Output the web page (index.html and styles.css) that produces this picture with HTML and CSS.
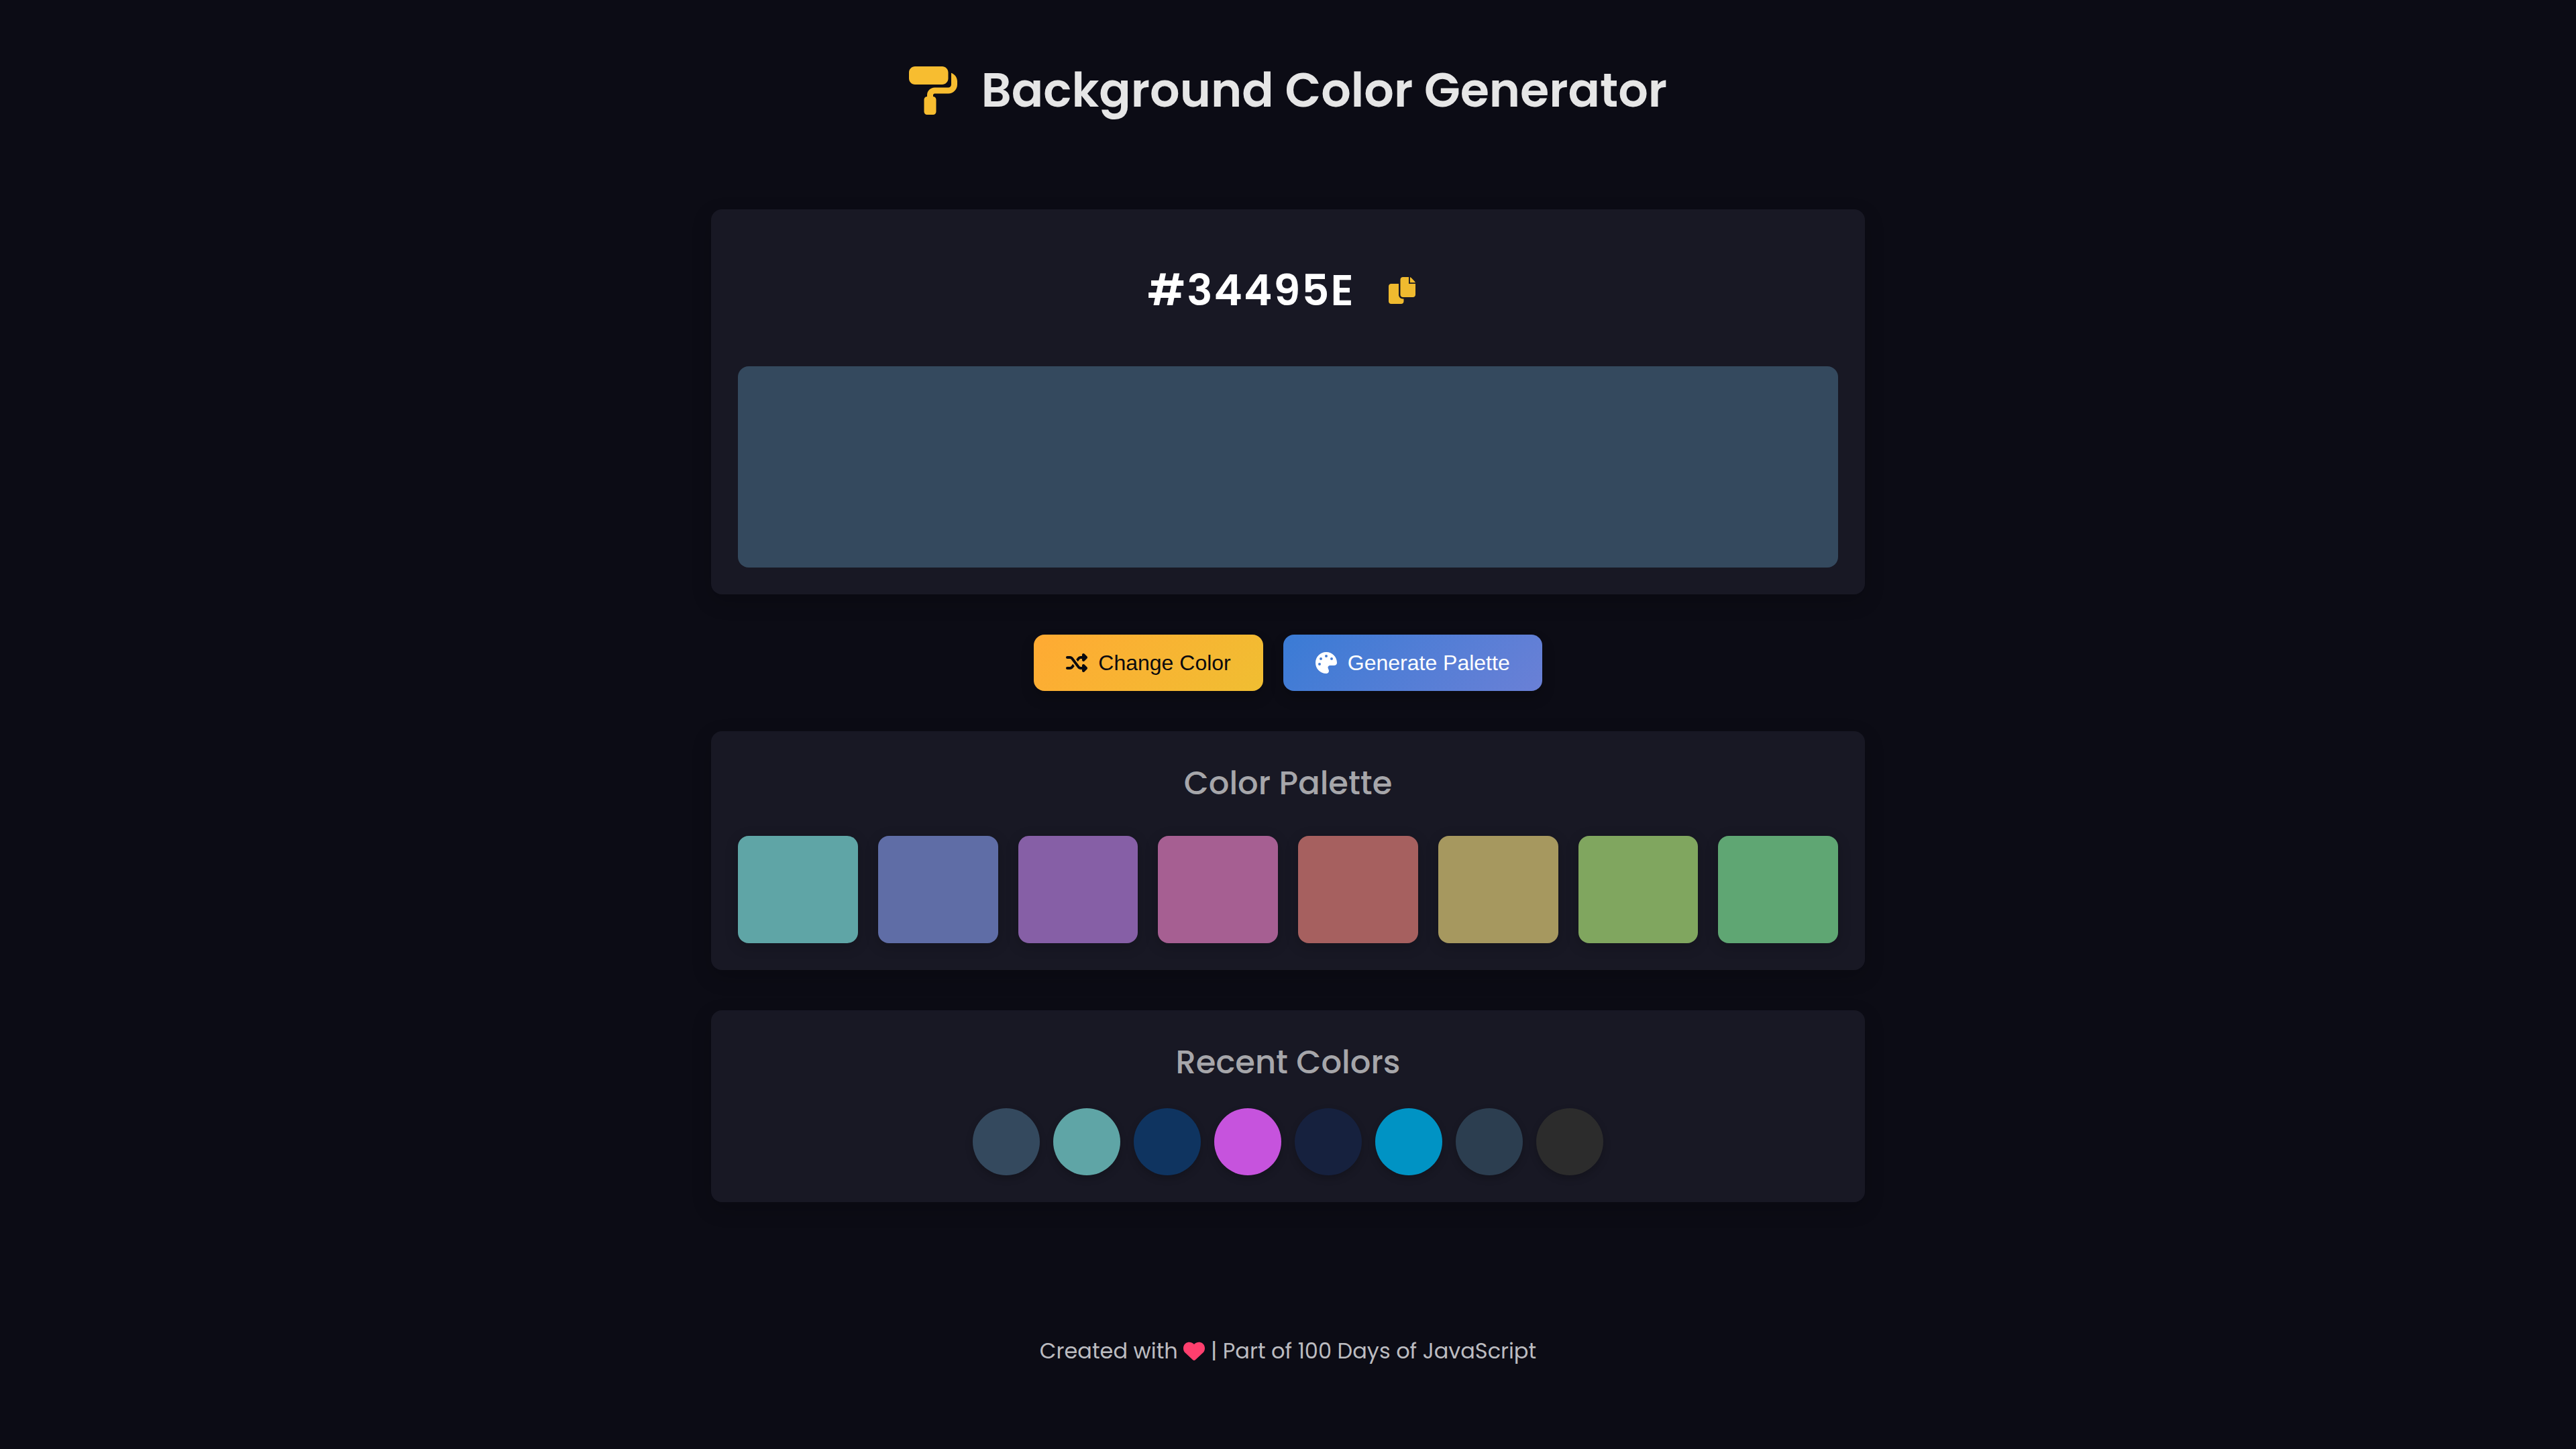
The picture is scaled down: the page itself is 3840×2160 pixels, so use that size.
FILE: index.html
```
<!DOCTYPE html>
<html lang="en">
<head>
<meta charset="UTF-8">
<meta name="viewport" content="width=device-width, initial-scale=1">
<title>Background Color Generator</title>
<link rel="stylesheet" href="styles.css">
</head>
<body>
<header class="header">
  <svg class="header-icon" viewBox="0 0 512 512" aria-hidden="true"><path d="M0 64C0 28.700 28.700 0 64 0H352c35.300 0 64 28.700 64 64v64c0 35.300-28.700 64-64 64H64c-35.300 0-64-28.700-64-64V64zM160 352c0-17.700 14.300-32 32-32V304c0-44.200 35.800-80 80-80H416c17.700 0 32-14.300 32-32V69.500c37.300 13.200 64 48.700 64 90.500v32c0 53-43 96-96 96H272c-8.800 0-16 7.200-16 16v16c17.700 0 32 14.300 32 32V480c0 17.700-14.300 32-32 32H192c-17.700 0-32-14.300-32-32V352z"/></svg>
  <h1 class="title">Background Color Generator</h1>
</header>
<main class="main">
  <section class="card">
    <div class="code-row">
      <span class="code">#34495E</span>
      <button class="copy" type="button" aria-label="Copy color code">
        <svg viewBox="0 0 512 512" aria-hidden="true"><path d="M272 0H396.100c12.700 0 24.900 5.100 33.900 14.100l67.900 67.900c9 9 14.100 21.200 14.100 33.900V336c0 26.500-21.500 48-48 48H272c-26.500 0-48-21.500-48-48V48c0-26.500 21.500-48 48-48zM48 128H192v64V336c0 44.200 35.800 80 80 80h16v48c0 26.500-21.500 48-48 48H48c-26.500 0-48-21.500-48-48V176c0-26.500 21.500-48 48-48z"/><path class="fold" d="M384 0h24v104h104v24H384z"/></svg>
      </button>
    </div>
    <div class="preview"></div>
  </section>
  <div class="actions">
    <button class="btn btn-change" type="button">
      <svg class="btn-icon" viewBox="0 0 512 512" aria-hidden="true"><path d="M403.800 34.400c12-5 25.700-2.200 34.900 6.900l64 64c6 6 9.400 14.100 9.400 22.600s-3.400 16.600-9.400 22.600l-64 64c-9.200 9.200-22.900 11.900-34.900 6.900s-19.800-16.600-19.800-29.600V160H352c-10.100 0-19.600 4.700-25.600 12.800L284 229.300 244 176l31.200-41.600C293.300 110.200 321.800 96 352 96h32V64c0-12.900 7.800-24.600 19.800-29.600zM164 282.700L204 336l-31.200 41.600C154.700 401.800 126.200 416 96 416H32c-17.700 0-32-14.300-32-32s14.300-32 32-32H96c10.100 0 19.600-4.700 25.600-12.800L164 282.700zm274.600 188c-9.200 9.200-22.900 11.900-34.900 6.900s-19.800-16.600-19.800-29.600V416H352c-30.200 0-58.700-14.200-76.800-38.400L121.600 172.800c-6-8.100-15.500-12.800-25.600-12.800H32c-17.700 0-32-14.300-32-32s14.300-32 32-32H96c30.200 0 58.700 14.200 76.800 38.400L326.400 339.200c6 8.100 15.500 12.800 25.600 12.800h32V320c0-12.900 7.800-24.600 19.800-29.600s25.700-2.200 34.900 6.900l64 64c6 6 9.400 14.100 9.400 22.600s-3.400 16.600-9.400 22.600l-64 64z"/></svg>
      <span>Change Color</span>
    </button>
    <button class="btn btn-palette" type="button">
      <svg class="btn-icon" viewBox="0 0 512 512" aria-hidden="true"><path fill-rule="evenodd" d="M512 256c0 .900 0 1.800 0 2.700-.400 36.500-33.600 61.300-70.100 61.300H344c-26.500 0-48 21.500-48 48 0 3.400.400 6.700 1 9.900 2.100 10.200 6.500 20 10.800 29.900 6.100 13.800 12.100 27.500 12.100 42 0 31.800-21.600 60.700-53.400 62-3.500.100-7 .200-10.600.200C114.600 512 0 397.400 0 256S114.600 0 256 0 512 114.600 512 256zM128 288a32 32 0 1 0-64 0 32 32 0 1 0 64 0zm0-96a32 32 0 1 0 0-64 32 32 0 1 0 0 64zM288 96a32 32 0 1 0-64 0 32 32 0 1 0 64 0zm96 96a32 32 0 1 0 0-64 32 32 0 1 0 0 64z"/></svg>
      <span>Generate Palette</span>
    </button>
  </div>
  <section class="card">
    <h2 class="card-title">Color Palette</h2>
    <div class="palette">
      <div class="swatch" style="background:#5fa5a6"></div>
      <div class="swatch" style="background:#5f6da6"></div>
      <div class="swatch" style="background:#865fa6"></div>
      <div class="swatch" style="background:#a65f92"></div>
      <div class="swatch" style="background:#a6605f"></div>
      <div class="swatch" style="background:#a6985f"></div>
      <div class="swatch" style="background:#80a65f"></div>
      <div class="swatch" style="background:#5fa673"></div>
    </div>
  </section>
  <section class="card">
    <h2 class="card-title card-title-tight">Recent Colors</h2>
    <div class="recent">
      <div class="dot" style="background:#34495e"></div>
      <div class="dot" style="background:#5fa5a6"></div>
      <div class="dot" style="background:#0f3460"></div>
      <div class="dot" style="background:#c653dd"></div>
      <div class="dot" style="background:#16213e"></div>
      <div class="dot" style="background:#0093c4"></div>
      <div class="dot" style="background:#2c3e50"></div>
      <div class="dot" style="background:#2c2c2c"></div>
    </div>
  </section>
</main>
<footer class="footer">Created with <svg class="heart" viewBox="0 0 512 448" role="img" aria-label="love"><path d="M47.600 268.300L228.300 437c7.500 7 17.400 10.900 27.700 10.900s20.200-3.900 27.700-10.900L464.400 268.300c30.400-28.300 47.600-68 47.600-109.500v-5.800c0-69.900-50.500-129.500-119.400-141C347 4.400 300.600 19.300 268 52L256 64 244 52c-32.600-32.700-79-47.600-124.600-40C50.500 23.500 0 83.100 0 153v5.800c0 41.500 17.200 81.200 47.600 109.500z"/></svg> | Part of 100 Days of JavaScript</footer>
</body>
</html>
```
FILE: styles.css
```
* {
  box-sizing: border-box;
  margin: 0;
  padding: 0;
}

body {
  min-height: 100vh;
  display: flex;
  flex-direction: column;
  align-items: center;
  background: #0c0c15;
  color: #e6e6e6;
  font-family: Poppins, Inter, sans-serif;
}

.header {
  display: flex;
  align-items: center;
  justify-content: center;
  gap: 36px;
  padding: 80px 40px 122px;
}

.header-icon {
  width: 72px;
  height: 72px;
  fill: #f7bd30;
}

.title {
  font-size: 70px;
  font-weight: 600;
  line-height: 110px;
}

.main {
  width: 100%;
  max-width: 1800px;
  padding: 0 40px;
  display: flex;
  flex-direction: column;
  gap: 60px;
}

.card {
  padding: 40px;
  border-radius: 16px;
  background: #181824;
  box-shadow: 0 10px 30px rgba(0, 0, 0, 0.2);
}

.code-row {
  display: flex;
  align-items: center;
  justify-content: center;
  gap: 30px;
  padding: 32px 0 64px;
}

.code {
  font-size: 64px;
  font-weight: 600;
  line-height: 98px;
  letter-spacing: 2px;
  color: #fff;
}

.copy {
  display: flex;
  padding: 20px;
  border: 0;
  background: none;
  cursor: pointer;
}

.copy svg {
  width: 40px;
  height: 40px;
  fill: #efba2f;
}

.copy .fold {
  fill: #181824;
}

.preview {
  height: 300px;
  border-radius: 16px;
  background: #34495e;
}

.actions {
  display: flex;
  flex-wrap: wrap;
  justify-content: center;
  gap: 30px;
}

.btn {
  display: flex;
  align-items: center;
  gap: 16px;
  padding: 24px 48px;
  border: 0;
  border-radius: 16px;
  font-family: "Liberation Sans", Arial, sans-serif;
  font-size: 32px;
  line-height: 36px;
  box-shadow: 0 10px 20px rgba(0, 0, 0, 0.2);
  cursor: pointer;
}

.btn-icon {
  width: 32px;
  height: 32px;
  fill: currentColor;
}

.btn-change {
  background: linear-gradient(135deg, #ffaa33, #f0be32);
  color: #0a0a0f;
}

.btn-palette {
  background: linear-gradient(135deg, #3a7bd5, #6a80d6);
  color: #fff;
}

.card-title {
  margin-bottom: 40px;
  font-size: 48px;
  font-weight: 500;
  line-height: 76px;
  text-align: center;
  color: #a6a6aa;
}

.card-title-tight {
  margin-bottom: 30px;
}

.palette {
  display: grid;
  grid-template-columns: repeat(8, 1fr);
  gap: 30px;
}

.swatch {
  height: 160px;
  border-radius: 16px;
  box-shadow: 0 5px 20px rgba(0, 0, 0, 0.2);
}

.recent {
  display: flex;
  flex-wrap: wrap;
  justify-content: center;
  gap: 20px;
}

.dot {
  width: 100px;
  height: 100px;
  border-radius: 50%;
  box-shadow: 0 5px 12px rgba(0, 0, 0, 0.2);
}

.footer {
  padding: 196px 40px 120px;
  font-size: 32px;
  font-weight: 400;
  line-height: 52px;
  text-align: center;
  color: #bcbcc0;
}

.heart {
  width: 32px;
  height: 28px;
  fill: #ff3f6e;
  vertical-align: -3px;
}
```
